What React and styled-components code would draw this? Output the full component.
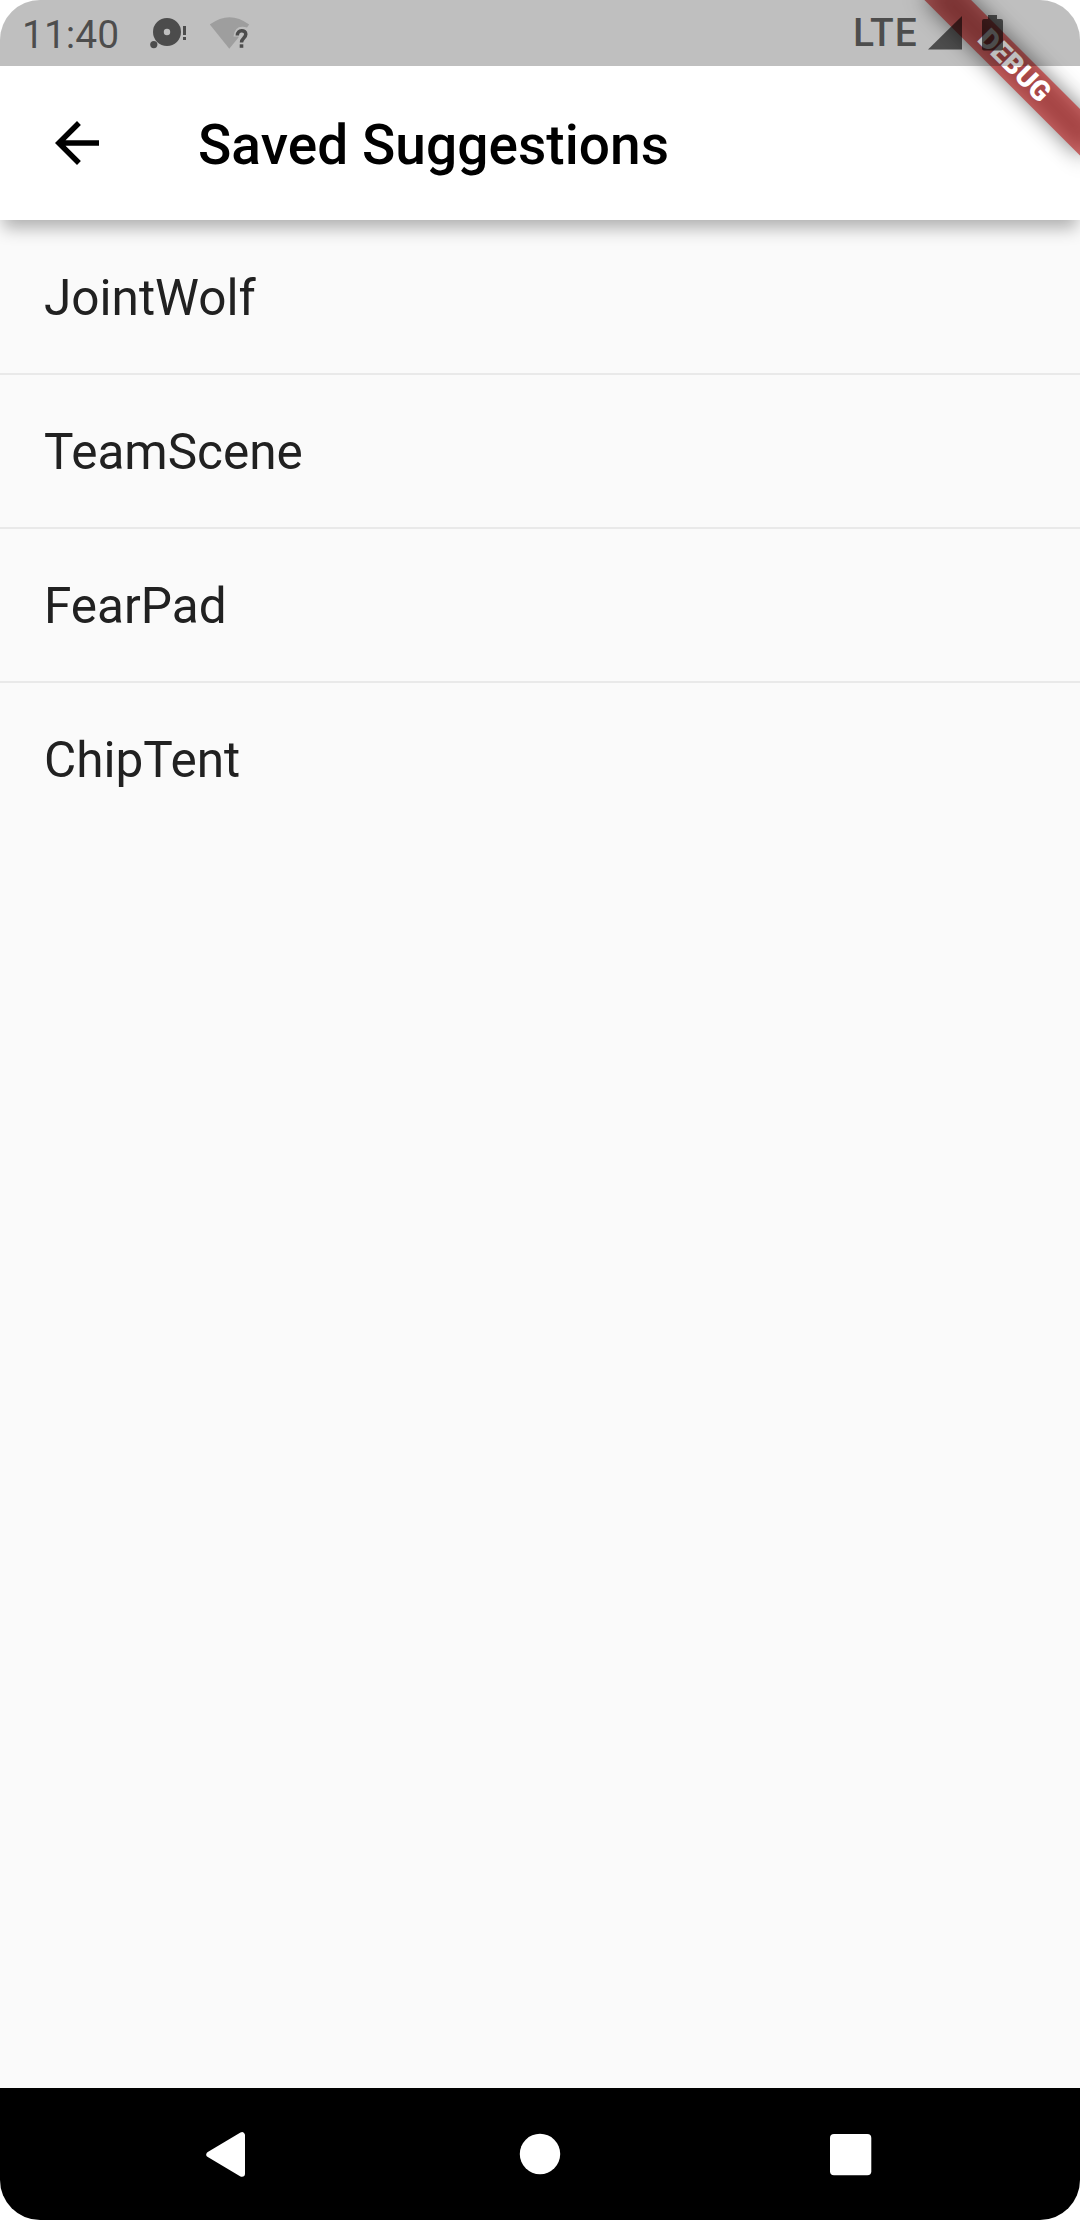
import React from "react";
import styled, { createGlobalStyle } from "styled-components";

const GlobalStyle = createGlobalStyle`
  *, *::before, *::after { box-sizing: border-box; }
  body { margin: 0; background: #fff; font-family: Roboto, "Noto Sans", sans-serif; }
`;

const Screen = styled.div`
  position: relative;
  width: 1080px;
  height: 2220px;
  display: flex;
  flex-direction: column;
  overflow: hidden;
  border-radius: 40px;
  background: #fafafa;
`;

const StatusBar = styled.header`
  position: relative;
  z-index: 3;
  flex: none;
  height: 66px;
  display: flex;
  align-items: center;
  justify-content: space-between;
  padding: 0 76px 0 22px;
  background: rgba(0, 0, 0, 0.25);
`;

const StatusGroup = styled.div`
  display: flex;
  align-items: center;
  height: 66px;
`;

const Clock = styled.span`
  width: 128px;
  font-size: 39px;
  line-height: 66px;
  padding-top: 3px;
  color: rgba(0, 0, 0, 0.6);
`;

const Network = styled.span`
  width: 76px;
  padding-left: 1px;
  font-size: 39px;
  font-weight: 500;
  letter-spacing: 0.8px;
  line-height: 66px;
  color: rgba(0, 0, 0, 0.6);
`;

const StatusIcon = styled.svg`
  display: block;
  flex: none;
  width: ${(p) => p.$width}px;
  height: 66px;
  color: #000;
`;

const AppBar = styled.div`
  position: relative;
  z-index: 1;
  flex: none;
  height: 220px;
  margin-top: -66px;
  padding-top: 66px;
  display: flex;
  align-items: center;
  background: #fff;
  box-shadow: 0 11px 16px -3px rgba(0, 0, 0, 0.3);
`;

const BackButton = styled.button`
  width: 154px;
  height: 154px;
  margin-right: 44px;
  padding: 0;
  display: flex;
  align-items: center;
  justify-content: center;
  border: 0;
  background: none;
`;

const Title = styled.h1`
  margin: 0;
  padding-top: 3px;
  font-size: 55px;
  font-weight: 500;
  letter-spacing: 0.06px;
  line-height: 64px;
  color: #000;
`;

const List = styled.ul`
  flex: 1;
  margin: 0;
  padding: 0;
  list-style: none;
`;

const Row = styled.li`
  height: 154px;
  display: flex;
  align-items: center;
  padding: 2px 44px 0;
  font-size: 49.5px;
  color: #212121;
  &:not(:last-child) {
    box-shadow: 0 1px 0 #e9e9e9, inset 0 -1px 0 #e9e9e9;
  }
`;

const NavBar = styled.nav`
  flex: none;
  height: 132px;
  display: flex;
  justify-content: center;
  background: #000;
`;

const NavButton = styled.button`
  width: 310px;
  height: 132px;
  padding: 0;
  display: flex;
  align-items: center;
  justify-content: center;
  border: 0;
  background: none;
`;

const Ribbon = styled.div`
  position: absolute;
  z-index: 2;
  top: 77px;
  left: 970px;
  width: 220px;
  height: 33px;
  transform: rotate(45deg);
  transform-origin: 110px -77px;
  color: #fff;
  font-size: 28.05px;
  font-weight: 900;
  line-height: 31px;
  text-align: center;
  &::before,
  &::after {
    content: "";
    position: absolute;
    inset: 0;
  }
  &::before {
    z-index: -2;
    background: rgba(0, 0, 0, 0.5);
    filter: blur(10.9px);
  }
  &::after {
    z-index: -1;
    background: rgba(183, 28, 28, 0.627);
  }
`;

const SUGGESTIONS = ["JointWolf", "TeamScene", "FearPad", "ChipTent"];

export default function App() {
  return (
    <>
      <GlobalStyle />
      <Screen>
        <StatusBar>
          <StatusGroup>
            <Clock>11:40</Clock>
            <StatusIcon $width={60} viewBox="150 0 60 66">
              <g fill="currentColor" fillOpacity="0.6">
                <path fillRule="evenodd" d="M167 18a14 14 0 1 0 0 28a14 14 0 0 0 0-28zM167 28.800a3.200 3.200 0 1 1 0 6.400a3.200 3.200 0 0 1 0-6.400z" />
                <circle cx="153.800" cy="44.600" r="3.600" />
                <path d="M183 26h3v9h-3zM183 37h3v3h-3z" />
              </g>
            </StatusIcon>
            <StatusIcon $width={40} viewBox="210 0 40 66">
              <path fill="currentColor" fillOpacity="0.17" d="M209.800 24.500Q229.500 9.800 249.200 24.500L247 27.500Q235 24 233.500 36.500H238.500V37.500L229.300 48.700Z" />
              <path fill="none" stroke="currentColor" strokeOpacity="0.6" strokeWidth="3.500" d="M237.300 35.500C237.300 29.300 245.800 29.300 245.800 34.300C245.800 38 241.500 38 241.500 42.500" />
              <path fill="currentColor" fillOpacity="0.6" d="M239.700 44.300h3.600v3.500h-3.600z" />
            </StatusIcon>
          </StatusGroup>
          <StatusGroup>
            <Network>LTE</Network>
            <StatusIcon $width={76} viewBox="928 0 76 66">
              <g fill="currentColor" fillOpacity="0.6">
                <path d="M928 49.500L962 16V49.500z" />
                <path d="M988 15h9v4h4q2 0 2 2v27.500q0 2-2 2h-17q-2 0-2-2v-27.500q0-2 2-2h4z" />
              </g>
            </StatusIcon>
          </StatusGroup>
        </StatusBar>
        <AppBar>
          <BackButton aria-label="Back">
            <svg width="66" height="66" viewBox="0 0 24 24">
              <path d="M20 11H7.830l5.590-5.590L12 4l-8 8 8 8 1.410-1.410L7.830 13H20v-2z" />
            </svg>
          </BackButton>
          <Title>Saved Suggestions</Title>
        </AppBar>
        <List>
          {SUGGESTIONS.map((name) => (
            <Row key={name}>{name}</Row>
          ))}
        </List>
        <NavBar>
          <NavButton aria-label="Back">
            <svg width="60" height="60" viewBox="0 0 60 60">
              <path d="M9.300 30.500L42 11.200V49.800Z" fill="#fff" stroke="#fff" strokeWidth="6" strokeLinejoin="round" />
            </svg>
          </NavButton>
          <NavButton aria-label="Home">
            <svg width="60" height="60" viewBox="0 0 60 60">
              <circle cx="30" cy="30" r="20.200" fill="#fff" />
            </svg>
          </NavButton>
          <NavButton aria-label="Recents">
            <svg width="60" height="60" viewBox="0 0 60 60">
              <rect x="10" y="10" width="41.300" height="41.300" rx="4" fill="#fff" />
            </svg>
          </NavButton>
        </NavBar>
        <Ribbon>DEBUG</Ribbon>
      </Screen>
    </>
  );
}
